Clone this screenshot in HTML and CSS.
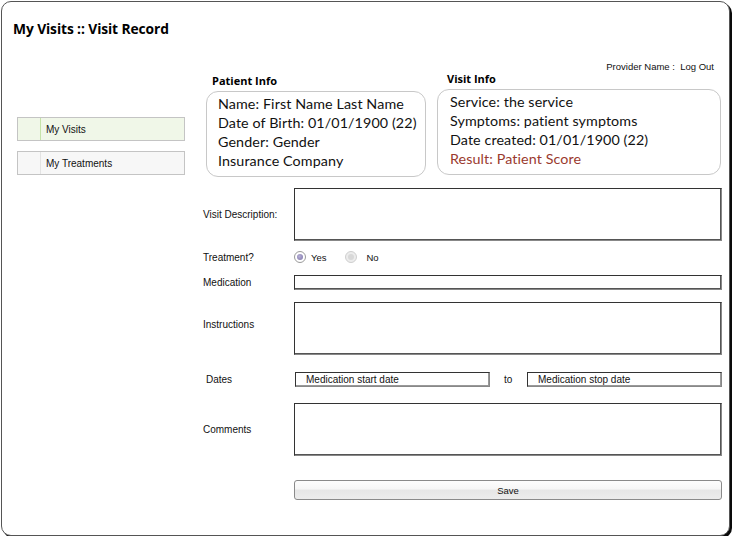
FILE: index.html
```html
<!DOCTYPE html>
<html lang="en">
<head>
<meta charset="utf-8">
<title>My Visits :: Visit Record</title>
<link rel="stylesheet" href="styles.css">
</head>
<body>
<div class="frame">
  <h1 class="title">My Visits :: Visit Record</h1>
  <div class="content">
    <nav class="sidebar">
      <a class="nav-item active"><span class="nav-icon"></span><span class="nav-label">My Visits</span></a>
      <a class="nav-item"><span class="nav-icon"></span><span class="nav-label">My Treatments</span></a>
    </nav>
    <main class="main">
      <div class="provider">Provider Name :&nbsp; Log Out</div>
      <div class="info-row">
        <section class="info patient">
          <h2 class="info-heading">Patient Info</h2>
          <div class="info-box">
            <div>Name: First Name Last Name</div>
            <div>Date of Birth: 01/01/1900 (22)</div>
            <div>Gender: Gender</div>
            <div>Insurance Company</div>
          </div>
        </section>
        <section class="info visit">
          <h2 class="info-heading">Visit Info</h2>
          <div class="info-box">
            <div>Service: the service</div>
            <div>Symptoms: patient symptoms</div>
            <div>Date created: 01/01/1900 (22)</div>
            <div class="result">Result: Patient Score</div>
          </div>
        </section>
      </div>
      <div class="form">
        <div class="row row-desc">
          <span class="label">Visit Description:</span>
          <div class="field area"></div>
        </div>
        <div class="row row-treat">
          <span class="label">Treatment?</span>
          <div class="radios">
            <span class="radio checked"></span><span class="radio-text yes">Yes</span>
            <span class="radio disabled"></span><span class="radio-text no">No</span>
          </div>
        </div>
        <div class="row row-med">
          <span class="label">Medication</span>
          <div class="field line"></div>
        </div>
        <div class="row row-instr">
          <span class="label label-up">Instructions</span>
          <div class="field area"></div>
        </div>
        <div class="row row-dates">
          <span class="label label-indent">Dates</span>
          <div class="dates">
            <div class="field date">Medication start date</div>
            <span class="to">to</span>
            <div class="field date">Medication stop date</div>
          </div>
        </div>
        <div class="row row-comments">
          <span class="label">Comments</span>
          <div class="field area"></div>
        </div>
        <div class="row row-save">
          <span class="label"></span>
          <button class="save">Save</button>
        </div>
      </div>
    </main>
  </div>
</div>
</body>
</html>
```

FILE: styles.css
```css
* { box-sizing: border-box; }
html, body { margin: 0; padding: 0; background: #fff; }
body { font-family: "Liberation Sans", Arial, sans-serif; color: #111; }

.frame {
  margin: 1px 0 0 1px;
  width: 729px;
  height: 535px;
  border: 1px solid #555;
  border-radius: 10px;
  box-shadow: 2px 2px 0 #0a0a0a;
  background: #fff;
}

.title {
  margin: 0;
  padding: 17px 0 0 11px;
  font-family: "Open Sans", sans-serif;
  font-weight: 700;
  font-size: 13.8px;
  line-height: 19px;
  letter-spacing: -0.1px;
  color: #000;
}

.content { display: flex; padding-left: 15px; }

.sidebar {
  width: 168px;
  margin-top: 79px;
  display: flex;
  flex-direction: column;
  gap: 10px;
}
.nav-item {
  display: flex;
  height: 24px;
  border: 1px solid #c4c4c4;
  background: #f7f7f7;
  align-items: stretch;
  font-size: 10px;
  color: #111;
}
.nav-icon { width: 23px; border-right: 1px solid #e3e3e3; }
.nav-label { display: flex; align-items: center; padding-left: 5px; }
.nav-item.active { background: #f0f7e8; }
.nav-item.active .nav-icon { border-right-color: #c5e3a8; }

.main { width: 519px; margin-left: 18px; }

.provider {
  margin-top: 23px;
  height: 12px;
  line-height: 12px;
  font-size: 9.5px;
  text-align: right;
  padding-right: 8px;
}

.info-row { display: flex; gap: 11px; padding-left: 3px; }
.info { display: flex; flex-direction: column; }
.info.patient { width: 220px; margin-top: 2px; }
.info.visit { width: 284px; }
.info-heading {
  margin: 0 0 4px;
  font-family: "Open Sans", sans-serif;
  font-weight: 700;
  font-size: 11px;
  line-height: 12px;
  color: #000;
}
.patient .info-heading { padding-left: 6px; }
.visit .info-heading { padding-left: 10px; }
.info-box {
  border: 1px solid #c8c8c8;
  border-radius: 12px;
  height: 86px;
  padding: 2px 0 0 11px;
  font-family: Lato, sans-serif;
  font-size: 14.3px;
  letter-spacing: 0.1px;
  line-height: 19px;
  color: #111;
  white-space: nowrap;
}
.visit .info-box { padding-left: 12px; }
.result { color: #9a3a2e; }

.form { margin-top: 11px; display: flex; flex-direction: column; }
.row { display: flex; align-items: center; }
.label { width: 91px; flex: none; font-size: 10px; color: #111; }
.label-indent { padding-left: 3px; }
.label-up { align-self: flex-start; margin-top: 17px; }

.field {
  border: 1px solid #333;
  border-right-color: #888;
  border-bottom-color: #888;
  box-shadow: inset -1px -1px 0 #555;
  background: #fff;
}
.area { width: 428px; height: 53px; }
.line { width: 428px; height: 15px; }

.row-treat { margin-top: 8px; height: 16px; }
.row-med { margin-top: 10px; }
.row-instr { margin-top: 12px; }
.row-dates { margin-top: 17px; }
.row-comments { margin-top: 16px; }
.row-save { margin-top: 24px; }

.radios { display: flex; align-items: center; font-size: 9.5px; }
.radio {
  width: 12px; height: 12px;
  border-radius: 50%;
  border: 1px solid #9a9a9a;
  display: flex; align-items: center; justify-content: center;
  background: #fff;
}
.radio::after { content: ""; width: 6px; height: 6px; border-radius: 50%; }
.radio.checked::after { background: radial-gradient(circle at 40% 40%, #b7b0d6, #7c73a8); }
.radio.disabled { border-color: #cfcfcf; background: #ececec; }
.radio.disabled::after { background: #d8d8d8; }
.radio-text.yes { margin-left: 5px; margin-right: 18px; }
.radio-text.no { margin-left: 10px; }

.dates { display: flex; align-items: center; padding-left: 1px; }
.date {
  width: 195px; height: 15px;
  font-size: 10px;
  line-height: 13px;
  padding-left: 10px;
  box-shadow: inset -1px -1px 0 #999;
}
.to { width: 37px; text-align: left; padding-left: 14px; font-size: 10px; }

.save {
  width: 428px;
  height: 20px;
  border: 1px solid #8a8a8a;
  border-radius: 3px;
  background: linear-gradient(#fdfdfd 0%, #f6f6f6 45%, #e6e6e6 50%, #ececec 100%);
  font-family: "Liberation Sans", Arial, sans-serif;
  font-size: 9.5px;
  color: #111;
  padding: 0;
}
```
